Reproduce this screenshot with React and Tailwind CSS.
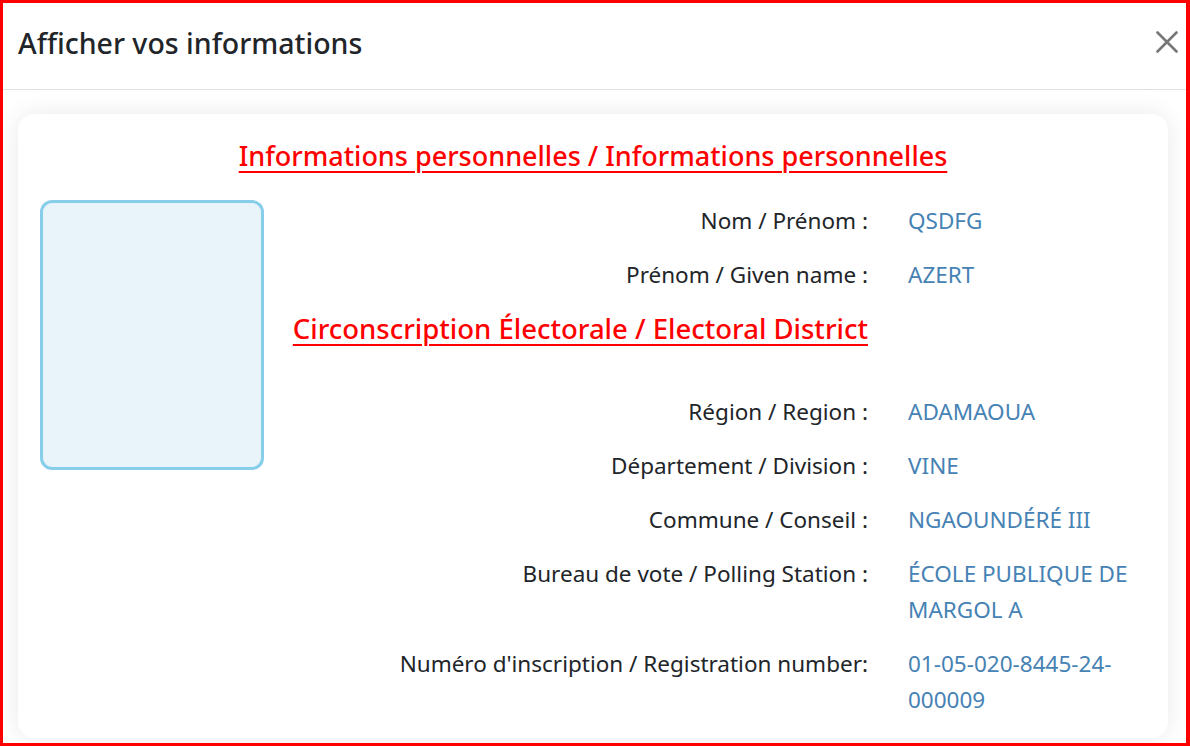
const PERSONAL = [
  { label: 'Nom / Prénom :', value: 'QSDFG' },
  { label: 'Prénom / Given name :', value: 'AZERT' },
];

const DISTRICT = [
  { label: 'Région / Region :', value: 'ADAMAOUA' },
  { label: 'Département / Division :', value: 'VINE' },
  { label: 'Commune / Conseil :', value: 'NGAOUNDÉRÉ III' },
  { label: 'Bureau de vote / Polling Station :', value: 'ÉCOLE PUBLIQUE DE MARGOL A' },
  { label: "Numéro d'inscription / Registration number:", value: '01-05-020-8445-24-000009' },
];

function InfoRow({ label, value }) {
  return (
    <>
      <div className="text-right text-[#212529] mb-[18px]">{label}</div>
      <div className="text-[#4682b4] mb-[18px] break-words">{value}</div>
    </>
  );
}

export default function App() {
  return (
    <div
      className="w-[1190px] h-[746px] overflow-hidden bg-white border-[3px] border-r-4 border-[#ff0000] flex flex-col"
      style={{ fontFamily: '"Noto Sans", "Open Sans", sans-serif' }}
    >
      <div className="h-[87px] shrink-0 flex items-center justify-between pl-[15px] pr-[8px] border-b border-[#dee2e6]">
        <h1 className="text-[28.5px] font-medium text-[#212529] leading-none -mt-[6px]">Afficher vos informations</h1>
        <button type="button" className="text-[#777] -mt-[8px]" aria-label="Close">
          <svg width="22" height="22" viewBox="0 0 22 22" fill="none" stroke="currentColor" strokeWidth="2.6" strokeLinecap="round">
            <path d="M1.5 1.5 L20.5 20.5 M20.5 1.5 L1.5 20.5" />
          </svg>
        </button>
      </div>

      <div className="flex-1 min-h-0 pt-[24px] pl-[15px] pr-[18px]">
        <div className="bg-white rounded-2xl shadow-[0_0_24px_rgba(0,0,0,0.09)] pt-[24px] pb-[2px] px-[22px]">
          <h2 className="text-center text-[27px] leading-[36px] font-medium text-[#ff0000] underline decoration-2 underline-offset-[5px] mb-[26px]">
            Informations personnelles / Informations personnelles
          </h2>

          <div className="flex items-start">
            <div className="w-[224px] h-[270px] shrink-0 rounded-xl border-[3px] border-[#87ceeb] bg-[#e8f4fa]" />

            <div className="flex-1 pl-[26px] pt-[3px] grid grid-cols-[1fr_238px] gap-x-[40px] text-[22.5px] leading-[36px]">
              {PERSONAL.map((r) => (
                <InfoRow key={r.label} {...r} />
              ))}

              <div className="text-right text-[27.5px] leading-[36px] font-medium text-[#ff0000] underline decoration-2 underline-offset-[5px] mb-[47px]">
                Circonscription Électorale / Electoral District
              </div>
              <div />

              {DISTRICT.map((r) => (
                <InfoRow key={r.label} {...r} />
              ))}
            </div>
          </div>
        </div>
      </div>
    </div>
  );
}
